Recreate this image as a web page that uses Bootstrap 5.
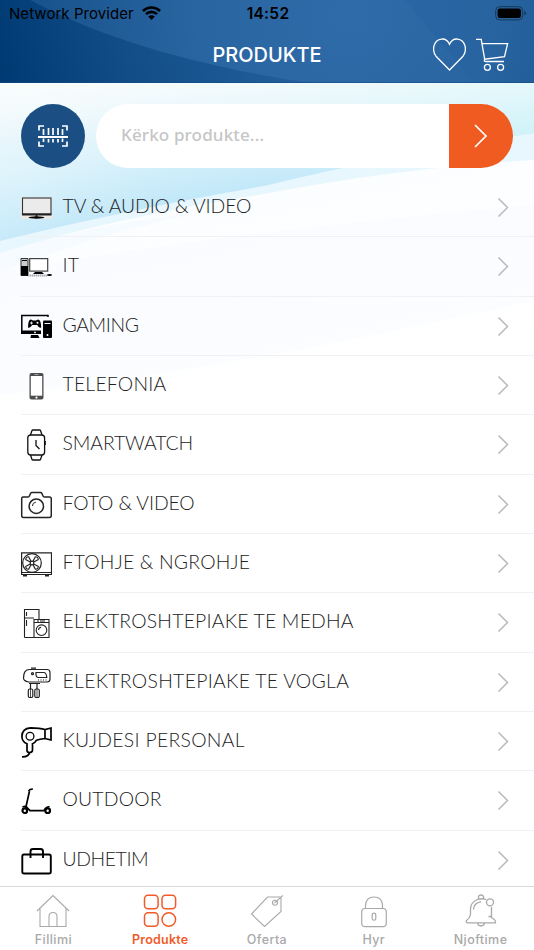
<!DOCTYPE html>
<html lang="sq">
<head>
<meta charset="utf-8">
<meta name="viewport" content="width=device-width, initial-scale=1">
<title>Produkte</title>
<link href="https://cdn.jsdelivr.net/npm/bootstrap@5.3.0/dist/css/bootstrap.min.css" rel="stylesheet">
<style>
body{font-family:Inter,"Liberation Sans",sans-serif;background:#fff}
.app{width:534px;height:950px}
.app-head{height:83px;color:#fff}
.backdrop{inset:0;width:100%;height:100%}
.status{height:28px;color:#000;font-size:15px;line-height:28px;padding:0 7px 0 9px}
.status-name{letter-spacing:.05px}
.wifi,.battery{margin-top:-2px}
.clock{font-weight:600;font-size:15.5px;letter-spacing:.3px}
.page-title{font-size:20px;font-weight:500;line-height:55px}
.head-tools{gap:10px;padding-top:10px}
.head-tools svg:last-child{margin-right:25px}
.third{flex:1 1 0;min-width:0}
.search-row{padding:20.5px 21px 0;gap:11px;height:95px}
.scan{width:64px;height:64px;background:#1b4f83}
.search-box{height:64px;border-radius:32px;overflow:hidden;background:#fff}
.search-box input{border:0;background:none;outline:0;padding:0 0 3px 25px;font:500 17px "Noto Sans","Open Sans",sans-serif;letter-spacing:.15px;min-width:0}
.search-box input::placeholder{color:#c5c6c6;opacity:1}
.go{width:64px;background:#ef5b21;border:0}
.cat{height:59.333px;margin-left:21px;padding-right:25px;border-bottom:1.5px solid #f0f0f5;color:#222;font:300 19.4px Lato,sans-serif}
.cat:last-child{border-bottom:0}
.cat>svg:first-child{margin:1px 10.5px 0 -1px}
.cat-name{padding-bottom:3px;letter-spacing:.2px;white-space:nowrap}
.snug{letter-spacing:-.1px}
.tight{letter-spacing:-.4px}
.loose{letter-spacing:.3px}
.tabs{height:64px;background:#fff;border-top:1.5px solid #d9dad9;color:#a9a9a9;font-size:12.5px;font-weight:500;letter-spacing:.42px}
.tab{flex:1 1 0;color:inherit;text-decoration:none;padding-top:7px}
.tab span{line-height:18px;margin-top:3px}
.tab.on{color:#f15a29;font-weight:600;letter-spacing:.25px}
</style>
<script src="https://cdn.jsdelivr.net/npm/bootstrap@5.3.0/dist/js/bootstrap.bundle.min.js"></script>
</head>
<body>
<div class="app d-flex flex-column position-relative overflow-hidden">
<header class="app-head position-relative flex-shrink-0">
<svg class="backdrop position-absolute" viewBox="0 0 534 83" preserveAspectRatio="none">
<defs><linearGradient id="h1" gradientUnits="userSpaceOnUse" x1="0" y1="70" x2="270" y2="0"><stop offset="0" stop-color="#003a73"/><stop offset=".45" stop-color="#124d87"/><stop offset="1" stop-color="#215e9b"/></linearGradient>
<radialGradient id="h2" gradientUnits="userSpaceOnUse" cx="350" cy="15" r="340"><stop offset="0" stop-color="#2f6ba8"/><stop offset=".45" stop-color="#2965a1"/><stop offset="1" stop-color="#15508a"/></radialGradient></defs>
<path fill="url(#h1)" d="M0 0H534V83H0z"/><path fill="url(#h2)" d="M30 0C100 37 190 65 310 83H534V0z"/><path d="M405 0L475 83H534V0z" fill="#12508f" opacity=".08"/><path d="M0 82.5H534" stroke="#164c82" opacity=".6"/>
</svg>
<div class="status position-relative d-flex">
<div class="third d-flex align-items-center"><span class="status-name">Network Provider</span>
<svg class="wifi ms-2" width="19" height="14" viewBox="0 0 19 14" fill="none" stroke="#000" stroke-width="2.6"><path d="M.9 5A12.5 12.5 0 0 1 18.1 5M4 8.1a8 8 0 0 1 11 0"/><path d="M9.5 14L6.2 10.6a5 5 0 0 1 6.600 0z" fill="#000" stroke="none"/></svg></div>
<span class="clock">14:52</span>
<div class="third d-flex justify-content-end align-items-center">
<svg class="battery" width="32" height="15" viewBox="0 0 32 15"><rect x=".7" y=".7" width="27" height="13.200" rx="4" fill="none" stroke="#17385b"/><rect x="2.600" y="2.600" width="23.300" height="9.400" rx="2.200"/><path d="M29.400 5v4.600q1.700-.6 1.700-2.300T29.400 5" fill="#17385b"/></svg></div>
</div>
<div class="position-relative d-flex">
<div class="third"></div><h1 class="page-title m-0">PRODUKTE</h1>
<div class="third head-tools d-flex justify-content-end">
<svg width="33" height="34" viewBox="0 0 33 34" fill="none" stroke="#fff" stroke-width="1.300"><path d="M16.500 32L3 18.200C.3 15 .2 10 1.200 7.200 3.400 0 13-1.600 16.500 6.200 20-1.600 29.600 0 31.800 7.200 32.800 10 32.700 15 30 18.200z"/></svg>
<svg width="33" height="34" viewBox="0 0 33 34" fill="none" stroke="#fff" stroke-width="1.300"><path d="M0 1.300H5.200L8.700 21.200 28.500 18.600 31.600 5.600H6M8.700 21.200Q7.500 23.500 9.800 23.500H28"/><circle cx="11.400" cy="29.300" r="3"/><circle cx="24.600" cy="29.300" r="3"/></svg>
</div></div>
</header>
<main class="position-relative flex-grow-1 overflow-hidden">
<svg class="backdrop position-absolute" viewBox="0 83 534 803" preserveAspectRatio="none">
<defs><linearGradient id="b1" gradientUnits="userSpaceOnUse" x1="130" y1="83" x2="155" y2="235"><stop offset="0" stop-color="#eff9fb"/><stop offset=".45" stop-color="#daf2fb"/><stop offset="1" stop-color="#b5e3f8"/></linearGradient>
<linearGradient id="b2" x1="0" y1="0" x2="1" y2="0"><stop offset="0" stop-color="#fff" stop-opacity=".15"/><stop offset=".3" stop-color="#fff" stop-opacity="0"/><stop offset=".5" stop-color="#dcf7f9" stop-opacity="0"/><stop offset="1" stop-color="#cdf3f8" stop-opacity=".8"/></linearGradient>
<linearGradient id="b4" x1="0" y1="0" x2="0" y2="1"><stop offset="0" stop-color="#fff" stop-opacity=".45"/><stop offset=".4" stop-color="#fff" stop-opacity="0"/></linearGradient>
<linearGradient id="b3" gradientUnits="userSpaceOnUse" x1="0" y1="200" x2="50" y2="430"><stop offset="0" stop-color="#fafdff"/><stop offset="1" stop-color="#fff"/></linearGradient></defs>
<path fill="url(#b3)" d="M0 83H534V886H0z"/>
<path fill="#e8f7fe" d="M0 83H534V160Q400 168 264 194 120 216 0 253z"/>
<path fill="url(#b1)" d="M0 83H534V133Q410 151 264 186 120 211 0 241z"/>
<path fill="url(#b2)" d="M0 83H534V133Q410 151 264 186 120 211 0 241z"/>
<path fill="url(#b4)" d="M0 83H534V133Q410 151 264 186 120 211 0 241z"/>
<path fill="#f0f8fe" opacity=".4" d="M0 253Q90 225 190 214 80 240 0 272z"/>
<path fill="#f6fafe" opacity=".3" d="M0 272Q200 235 534 205V300Q230 370 0 395z"/>
</svg>
<form class="search-row position-relative d-flex">
<button type="button" class="scan btn rounded-circle p-0 border-0 flex-shrink-0" aria-label="Skano">
<svg width="32" height="24" viewBox="0 0 32 24" fill="none" stroke="#fff" stroke-width="1.700"><path d="M2 6.500V2H7M25 2h5V6.500M2 17.500V22H7M25 22h5V17.500M6.500 5V11M11.500 4V11M16 4V11M21 4V11M25.500 5V11M6.500 14.500V18M11.500 15V18.500M16 15V18.500M21 15V18.500M25.500 14.500V18"/><path d="M1 13H31" stroke-width="2"/></svg></button>
<div class="search-box d-flex flex-grow-1"><input class="flex-grow-1" placeholder="Kërko produkte..." aria-label="Kërko produkte">
<button type="button" class="go p-0" aria-label="Kërko"><svg width="14" height="24" viewBox="0 0 14 24" fill="none" stroke="#fff" stroke-width="1.700"><path d="M1 1L12 12 1 23"/></svg></button></div>
</form>
<div class="position-relative">
<div class="cat d-flex align-items-center"><svg width="32" height="32" viewBox="0 0 32 32"><path fill="#eee9e5" d="M1 5H32V27H1z"/><rect x="2.500" y="6" width="28.500" height="16" fill="#ebebeb" stroke="#333" stroke-width="1.100"/><path d="M2 22.500H31.500M16.500 22v4" stroke="#222" stroke-width="1.800"/><ellipse cx="16.500" cy="25.500" rx="8" ry="1.200"/></svg><span class="cat-name snug me-auto">TV &amp; AUDIO &amp; VIDEO</span></div>
<div class="cat d-flex align-items-center"><svg width="32" height="32" viewBox="0 0 32 32"><path d="M1 7.500H8V24.500H1z" fill="#ccc" stroke="#333"/><path d="M1 15H8V24.500H1zM2 9H7v1H2z"/><rect x="9.700" y="7.600" width="18" height="12.500" fill="#fff" stroke="#444" stroke-width="1.200"/><path d="M15 21h7l2 2H13z"/><path d="M8 24.500H27" stroke="#aaa" stroke-width="2" stroke-dasharray="1.500 .500"/><ellipse cx="29.500" cy="24" rx="2.500" ry="1.100"/></svg><span class="cat-name me-auto">IT</span></div>
<div class="cat d-flex align-items-center"><svg width="32" height="32" viewBox="0 0 32 32"><path d="M28 7V5.500H1.800V22H21" fill="none" stroke="#000" stroke-width="1.500"/><path d="M1 20.500H21V24H1zM11 25h7l1.500 3h-9z"/><rect x="23" y="10.500" width="9" height="17.500" rx="1"/><path d="M24.500 13.500h6" stroke="#fff"/><circle cx="27.500" cy="25" r="1" fill="#fff"/><circle cx="15" cy="22.400" r=".9" fill="#fff"/><path d="M8 17.500q.2-8.500 3-8l2 1h3l2-1q3 0 3.200 8-2 1.200-4-2.500h-5Q10 18.500 8 17.500"/><path d="M10 13h3m-1.500-1.500v3" stroke="#fff" stroke-width=".800"/><circle cx="17.500" cy="12.700" r="1" fill="#fff"/></svg><span class="cat-name tight me-auto">GAMING</span></div>
<div class="cat d-flex align-items-center"><svg width="32" height="32" viewBox="0 0 32 32"><rect x="9.500" y="3" width="14" height="26.500" rx="2" fill="#4d4d4d"/><path d="M10.800 6H22.200V25.700H10.800z" fill="#fff"/><path d="M14.500 4.500h4" stroke="#bbb" stroke-width=".800"/><circle cx="16.500" cy="27.600" r="1.100" fill="#fff"/></svg><span class="cat-name me-auto">TELEFONIA</span></div>
<div class="cat d-flex align-items-center"><svg width="32" height="32" viewBox="0 0 32 32" fill="none" stroke="#111" stroke-width="1.300"><rect x="7.800" y="6" width="16.800" height="20" rx="3"/><path d="M10.500 6l1.500-4.500q.2-.5 1-.5h6.500q.8 0 1 .5L22 6M10.500 26l1.500 4.500q.2.500 1 .5h6.500q.8 0 1-.5L22 26M16 11v5.500l3.500 3.500M25.200 12v4"/></svg><span class="cat-name snug me-auto">SMARTWATCH</span></div>
<div class="cat d-flex align-items-center"><svg width="32" height="32" viewBox="0 0 32 32" fill="none" stroke="#222" stroke-width="1.500"><path d="M3 9H8Q9 9 9.400 8L10.500 5.500Q11 4.500 12 4.500H20.500Q21.500 4.500 22 5.500L23 8Q23.400 9 24.500 9H29.500Q31.300 9 31.300 11V27.500Q31.300 29.500 29.500 29.500H3.500Q1.700 29.500 1.700 27.500V11Q1.700 9 3 9z"/><circle cx="16.300" cy="18.200" r="7.200"/><path d="M12.400 18q.1-3.200 3.500-4" stroke-width="1"/></svg><span class="cat-name snug me-auto">FOTO &amp; VIDEO</span></div>
<div class="cat d-flex align-items-center"><svg width="32" height="32" viewBox="0 0 32 32" fill="none" stroke="#222" stroke-width="1.200"><path d="M1.600 4.800H31.500V26.500H1.600zM1.600 24.500H31.500"/><circle cx="12" cy="15" r="9.300"/><circle cx="12" cy="15" r="1.800"/><path d="M10.300 14L5.500 11.500M11 13.300L8.500 8.500M13 13.300L15.500 8.500M13.700 14L18.500 11.500M10.300 16L5.500 18.500M11 16.700L8.500 21.500M13 16.700L15.500 21.500M13.700 16L18.500 18.500M5.500 11.500q.5-2.500 3-3M15.500 8.500q2.500.5 3 3M5.500 18.500q.5 2.500 3 3M15.500 21.500q2.500-.5 3-3"/><path d="M3 27.500h4M25 27.500h4" stroke-width="1.800"/></svg><span class="cat-name me-auto">FTOHJE &amp; NGROHJE</span></div>
<div class="cat d-flex align-items-center"><svg width="32" height="32" viewBox="0 0 32 32" fill="none" stroke="#222" stroke-width="1.100"><path d="M4.500 30.500V2.500H19V12M4.500 11H14M6.500 5v4M6.500 13v6M14 30.500V12.500H29V30.500zM14 15.500H29M4.500 30.500H14M18 13v2M20 14h5"/><circle cx="21.500" cy="23.200" r="5.300"/><path d="M18.500 23q.2-2.500 2.600-2.800"/></svg><span class="cat-name me-auto">ELEKTROSHTEPIAKE TE MEDHA</span></div>
<div class="cat d-flex align-items-center"><svg width="32" height="32" viewBox="0 0 32 32" fill="none" stroke="#222" stroke-width="1.200"><path d="M9.500 3.500H27Q30 3.500 30 6.500V13Q30 16 27 16H8.500Q3.500 15 3.500 12 3.500 3.500 9.500 3.500z"/><path d="M11 2.200h5M9 17.500H20M16 6.500h7.500q3 0 3.300 5H18q-2-.5-2-2.500z"/><circle cx="12.500" cy="7.700" r="1"/><path d="M18 14h9" stroke-dasharray="1 1.500"/><path d="M10.500 18v5M17 18v5"/><rect x="8.300" y="23" width="4.500" height="8.500" rx="1.500"/><rect x="14.800" y="23" width="4.500" height="8.500" rx="1.500"/><path d="M10.500 23v8M17 23v8" stroke-width=".800"/></svg><span class="cat-name loose me-auto">ELEKTROSHTEPIAKE TE VOGLA</span></div>
<div class="cat d-flex align-items-center"><svg width="32" height="32" viewBox="0 0 32 32" fill="none" stroke="#000" stroke-width="1.700"><path d="M10.500 1.800Q20 2 25 3.500L31 2V14L25 12.500Q19.500 13 16.500 14.200 15 17 12.500 17.700V24.500Q12 26.500 9.500 26.500 7 26.500 7 24.500V17.800Q2 16 1.900 10.300 2 2.500 10.500 1.800zM25 3.500V12.500M9.700 26.500Q8.500 31 2 30.800"/><circle cx="10" cy="10.200" r="3.900" stroke-width="1.300"/></svg><span class="cat-name loose me-auto">KUJDESI PERSONAL</span></div>
<div class="cat d-flex align-items-center"><svg width="32" height="32" viewBox="0 0 32 32" fill="none" stroke="#000" stroke-width="1.700"><circle cx="4.800" cy="25.700" r="2.300" stroke-width="2.200"/><circle cx="27.700" cy="25.700" r="2.300" stroke-width="2.200"/><path d="M8.500 6Q10 4 12.800 4.200M9.500 6L5.500 24M2.500 22Q6 20.500 7.500 23L10 25.700H24Q25.500 22 29.500 21.500"/></svg><span class="cat-name me-auto">OUTDOOR</span></div>
<div class="cat d-flex align-items-center"><svg width="32" height="32" viewBox="0 0 32 32" fill="none" stroke="#000" stroke-width="1.900"><rect x="2.300" y="9.500" width="28.500" height="19" rx="1.800"/><path d="M10.500 13V6.500Q10.500 4 13 4H20.500Q23 4 23 6.500V13"/></svg><span class="cat-name tight me-auto">UDHETIM</span></div>
</div>
</main>
<nav class="tabs d-flex position-relative flex-shrink-0">
<a href="#" class="tab d-flex flex-column align-items-center"><svg width="34" height="34" viewBox="0 0 34 34" fill="none" stroke="currentColor" stroke-width="1.100"><path d="M1 17L17 1.500 33 17M4 14.500V32.500H30V14.500M13 32.500V22Q13.300 18.500 17 18.500T21 22V32.500"/></svg><span>Fillimi</span></a>
<a href="#" class="tab on d-flex flex-column align-items-center"><svg width="34" height="34" viewBox="0 0 34 34" fill="none" stroke="currentColor" stroke-width="1.500"><rect x="1.500" y="1.200" width="13.600" height="13.600" rx="3.500"/><rect x="19" y="1.200" width="13.600" height="13.600" rx="3.500"/><rect x="1.500" y="18.700" width="13.600" height="13.600" rx="3.500"/><circle cx="25.800" cy="25.500" r="6.800"/></svg><span>Produkte</span></a>
<a href="#" class="tab d-flex flex-column align-items-center"><svg width="34" height="34" viewBox="0 0 34 34" fill="none" stroke="currentColor" stroke-width="1.100"><path d="M17.500 3H31V17.500L14.500 32.500 1.500 20zM24.500 9L33 1.300"/><circle cx="25" cy="8.800" r="2.500"/></svg><span>Oferta</span></a>
<a href="#" class="tab d-flex flex-column align-items-center"><svg width="34" height="34" viewBox="0 0 34 34" fill="none" stroke="currentColor" stroke-width="1.200"><rect x="4.700" y="14.500" width="24.600" height="18.200" rx="3.500"/><path d="M8.500 14.500V11.500Q9 3 17 3T25.500 11.500V14.500"/><rect x="15.200" y="19.200" width="3.600" height="7" rx="1.800"/></svg><span>Hyr</span></a>
<a href="#" class="tab d-flex flex-column align-items-center"><svg width="34" height="34" viewBox="0 0 34 34" fill="none" stroke="currentColor" stroke-width="1.300"><path d="M22 5.500Q18 4 13.500 5.500 6.500 8.500 6.500 15V20.500Q6 24 2.500 26.500 1.500 28.800 4 28.800H31.500Q32 26 27.500 23.500V13M27.500 22.500h-3M14.500 5V2.500Q15 1 17 1T19.500 2.500V5M13.500 29Q14 32 17 32T20.500 29M9.500 15.500Q9.500 9.500 17 7.700"/><circle cx="26" cy="8.300" r="3.500"/></svg><span>Njoftime</span></a>
</nav>
</div>
<script>
document.querySelectorAll('.cat').forEach(function (row) {
  row.insertAdjacentHTML('beforeend', '<svg width="12" height="20" viewBox="0 0 12 20" fill="none" stroke="#b9babb" stroke-width="1.500"><path d="M1.500 1.500L10.500 10.500 1.500 19.500"/></svg>');
});
</script>
</body>
</html>
